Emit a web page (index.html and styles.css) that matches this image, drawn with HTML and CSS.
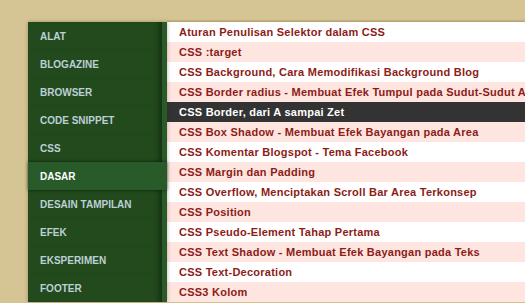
FILE: index.html
```html
<!DOCTYPE html>
<html>
<head>
<meta charset="utf-8">
<link rel="stylesheet" href="styles.css">
</head>
<body>
<div class="page">
  <nav class="sidebar">
    <ul class="menu">
      <li class="menu-item">ALAT</li>
      <li class="menu-item">BLOGAZINE</li>
      <li class="menu-item">BROWSER</li>
      <li class="menu-item">CODE SNIPPET</li>
      <li class="menu-item">CSS</li>
      <li class="menu-item active">DASAR</li>
      <li class="menu-item">DESAIN TAMPILAN</li>
      <li class="menu-item">EFEK</li>
      <li class="menu-item">EKSPERIMEN</li>
      <li class="menu-item">FOOTER</li>
    </ul>
  </nav>
  <ul class="posts">
    <li class="post">Aturan Penulisan Selektor dalam CSS</li>
    <li class="post">CSS :target</li>
    <li class="post">CSS Background, Cara Memodifikasi Background Blog</li>
    <li class="post">CSS Border radius - Membuat Efek Tumpul pada Sudut-Sudut Area</li>
    <li class="post hover">CSS Border, dari A sampai Zet</li>
    <li class="post">CSS Box Shadow - Membuat Efek Bayangan pada Area</li>
    <li class="post">CSS Komentar Blogspot - Tema Facebook</li>
    <li class="post">CSS Margin dan Padding</li>
    <li class="post">CSS Overflow, Menciptakan Scroll Bar Area Terkonsep</li>
    <li class="post">CSS Position</li>
    <li class="post">CSS Pseudo-Element Tahap Pertama</li>
    <li class="post">CSS Text Shadow - Membuat Efek Bayangan pada Teks</li>
    <li class="post">CSS Text-Decoration</li>
    <li class="post">CSS3 Kolom</li>
  </ul>
</div>
</body>
</html>
```

FILE: styles.css
```css
html, body {
  margin: 0;
  padding: 0;
  background: #d6c594;
  overflow: hidden;
  height: 303px;
}
.page {
  display: flex;
  padding: 22px 0 0 28px;
  font-family: "Liberation Sans", Arial, sans-serif;
  font-weight: bold;
}
.sidebar {
  width: 139px;
  flex: none;
  background: #295a29;
  box-shadow: 0 0 4px rgba(60, 40, 0, 0.35);
  position: relative;
  z-index: 1;
}
.menu {
  list-style: none;
  margin: 0;
  padding: 0;
  width: 134px;
}
.menu-item {
  height: 28px;
  line-height: 29px;
  padding-left: 12px;
  font-size: 10px;
  color: #bcd0d6;
  background: #224a1c;
  box-shadow: inset -7px 0 6px -5px rgba(0, 0, 0, 0.45);
}
.menu-item.active {
  width: 139px;
  box-sizing: border-box;
  background: #295a29;
  color: #ffffff;
  box-shadow: 0 0 3px rgba(0, 0, 0, 0.6);
  position: relative;
}
.posts {
  list-style: none;
  margin: 0;
  padding: 0;
  flex: 1;
  min-width: 0;
  overflow: hidden;
  box-shadow: 0 -1px 2px rgba(90, 70, 20, 0.4);
}
.post {
  height: 20px;
  line-height: 20px;
  padding-left: 12px;
  font-size: 11px;
  letter-spacing: 0.25px;
  color: #8c1c18;
  white-space: nowrap;
  background: #ffffff;
}
.post:nth-child(even) {
  background: #fee5e0;
}
.post.hover {
  background: #333333;
  color: #ffffff;
}
```
